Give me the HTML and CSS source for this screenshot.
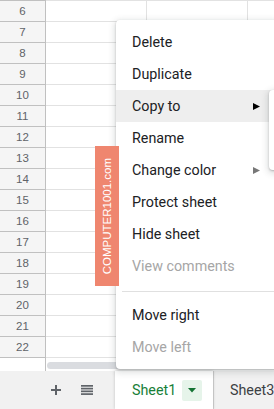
FILE: index.html
```html
<!DOCTYPE html>
<html>
<head>
<meta charset="utf-8">
<link rel="stylesheet" href="styles.css">
</head>
<body>
<div class="app">
  <div class="grid">
    <div class="row"><div class="rh">6</div><div class="c"></div><div class="c"></div><div class="c"></div></div>
    <div class="row"><div class="rh">7</div><div class="c"></div><div class="c"></div><div class="c"></div></div>
    <div class="row"><div class="rh">8</div><div class="c"></div><div class="c"></div><div class="c"></div></div>
    <div class="row"><div class="rh">9</div><div class="c"></div><div class="c"></div><div class="c"></div></div>
    <div class="row"><div class="rh">10</div><div class="c"></div><div class="c"></div><div class="c"></div></div>
    <div class="row"><div class="rh">11</div><div class="c"></div><div class="c"></div><div class="c"></div></div>
    <div class="row"><div class="rh">12</div><div class="c"></div><div class="c"></div><div class="c"></div></div>
    <div class="row"><div class="rh">13</div><div class="c"></div><div class="c"></div><div class="c"></div></div>
    <div class="row"><div class="rh">14</div><div class="c"></div><div class="c"></div><div class="c"></div></div>
    <div class="row"><div class="rh">15</div><div class="c"></div><div class="c"></div><div class="c"></div></div>
    <div class="row"><div class="rh">16</div><div class="c"></div><div class="c"></div><div class="c"></div></div>
    <div class="row"><div class="rh">17</div><div class="c"></div><div class="c"></div><div class="c"></div></div>
    <div class="row"><div class="rh">18</div><div class="c"></div><div class="c"></div><div class="c"></div></div>
    <div class="row"><div class="rh">19</div><div class="c"></div><div class="c"></div><div class="c"></div></div>
    <div class="row"><div class="rh">20</div><div class="c"></div><div class="c"></div><div class="c"></div></div>
    <div class="row"><div class="rh">21</div><div class="c"></div><div class="c"></div><div class="c"></div></div>
    <div class="row"><div class="rh">22</div><div class="c"></div><div class="c"></div><div class="c"></div></div>
  </div>
  <div class="hscroll">
    <div class="hs-head"></div>
    <div class="track"><div class="thumb"></div></div>
  </div>
  <div class="tabbar">
    <div class="tbtn">
      <svg width="10" height="10" viewBox="0 0 10 10"><rect x="4" y="0" width="2" height="10" fill="#5f6368"/><rect x="0" y="4" width="10" height="2" fill="#5f6368"/></svg>
    </div>
    <div class="tbtn">
      <svg width="12" height="10" viewBox="0 0 12 10"><rect x="0" y="0" width="12" height="1.7" fill="#5f6368"/><rect x="0" y="2.75" width="12" height="1.7" fill="#5f6368"/><rect x="0" y="5.5" width="12" height="1.7" fill="#5f6368"/><rect x="0" y="8.25" width="12" height="1.7" fill="#5f6368"/></svg>
    </div>
    <div class="tabs">
      <div class="tab active">
        <span class="tab-name">Sheet1</span>
        <span class="tab-dd"><svg width="8" height="5" viewBox="0 0 8 5"><polygon points="0,0 8,0 4,4.5" fill="#137333"/></svg></span>
      </div>
      <div class="tab">
        <span class="tab-name">Sheet3</span>
      </div>
    </div>
  </div>

  <div class="menu">
    <div class="item">Delete</div>
    <div class="item">Duplicate</div>
    <div class="item hover"><span>Copy to</span><svg class="arr" width="7" height="7" viewBox="0 0 7 7"><polygon points="0,0 7,3.5 0,7" fill="#000"/></svg></div>
    <div class="item">Rename</div>
    <div class="item"><span>Change color</span><svg class="arr" width="7" height="7" viewBox="0 0 7 7"><polygon points="0,0 7,3.5 0,7" fill="#777"/></svg></div>
    <div class="item">Protect sheet</div>
    <div class="item">Hide sheet</div>
    <div class="item disabled">View comments</div>
    <div class="sep"></div>
    <div class="item">Move right</div>
    <div class="item disabled">Move left</div>
  </div>
  <div class="submenu"></div>
  <div class="watermark"><span>COMPUTER1001.com</span></div>
</div>
</body>
</html>
```
FILE: styles.css
```css
html, body {
  margin: 0;
  padding: 0;
  background: #fff;
}
.app {
  position: relative;
  width: 274px;
  height: 409px;
  overflow: hidden;
  display: flex;
  flex-direction: column;
}
.grid {
  display: flex;
  flex-direction: column;
}
.row {
  display: flex;
  height: 21px;
}
.rh {
  box-sizing: border-box;
  flex: 0 0 46px;
  height: 21px;
  border-top: 1px solid #c0c0c0;
  border-right: 1px solid #c0c0c0;
  background: #f5f5f5;
  color: #5f6368;
  font: 11.5px "Liberation Sans", Arial, sans-serif;
  display: flex;
  align-items: center;
  justify-content: center;
}
.c {
  box-sizing: border-box;
  flex: 0 0 101px;
  height: 21px;
  border-top: 1px solid #e2e2e2;
  border-right: 1px solid #e2e2e2;
}
.hscroll {
  display: flex;
  height: 14px;
}
.hs-head {
  box-sizing: border-box;
  flex: 0 0 46px;
  border-top: 1px solid #c0c0c0;
  border-right: 1px solid #c0c0c0;
}
.track {
  flex: 1;
  border-top: 1px solid #e2e2e2;
  padding: 4px 0 0 1px;
}
.thumb {
  width: 300px;
  height: 7px;
  border-radius: 4px;
  background: #dadce0;
}
.tabbar {
  flex: 1;
  display: flex;
  background: #f1f1f1;
  padding-left: 41px;
}
.tbtn {
  flex: 0 0 30px;
  margin-right: 1px;
  display: flex;
  align-items: center;
  justify-content: center;
}
.tabs {
  flex: 0 0 auto;
  display: flex;
  margin-left: 12px;
}
.tab {
  flex: 0 0 auto;
  display: flex;
  align-items: center;
  padding: 0 11px 0 16px;
  font: 14.3px Roboto, "Liberation Sans", sans-serif;
  color: #3c4043;
  border-left: 1px solid #d4d4d4;
}
.tab.active {
  background: #fff;
  color: #188038;
  width: 98px;
  box-sizing: border-box;
  padding-left: 17px;
  border-left: 0;
  box-shadow: 0 0 3px rgba(0,0,0,0.2);
  position: relative;
}
.tab-dd {
  margin-left: 6px;
  width: 20px;
  height: 21px;
  border-radius: 2px;
  background: #e6f4ea;
  display: flex;
  align-items: center;
  justify-content: center;
}
.menu {
  position: absolute;
  left: 116px;
  top: 20px;
  width: 162px;
  padding: 6px 0;
  background: #fff;
  border-radius: 4px;
  box-shadow: 0 2px 6px 2px rgba(60,64,67,0.15), 0 1px 2px rgba(60,64,67,0.3);
  font: 14.3px Roboto, "Liberation Sans", sans-serif;
  color: #202124;
  z-index: 2;
}
.item {
  height: 32px;
  display: flex;
  align-items: center;
  justify-content: space-between;
  padding: 0 18px 0 16px;
}
.item.hover {
  background: #eeeeee;
}
.item.disabled {
  color: #a6a6a6;
}
.sep {
  height: 1px;
  background: #e0e0e0;
  margin: 9px 0 7px 6px;
}
.submenu {
  position: absolute;
  left: 269px;
  top: 90px;
  width: 120px;
  height: 80px;
  background: #fff;
  border-radius: 4px;
  box-shadow: 0 2px 6px 2px rgba(60,64,67,0.15), 0 1px 2px rgba(60,64,67,0.3);
  z-index: 3;
}
.watermark {
  position: absolute;
  left: 95px;
  top: 146px;
  width: 24px;
  height: 140px;
  background: #ef866f;
  display: flex;
  align-items: center;
  justify-content: center;
  z-index: 4;
}
.watermark span {
  writing-mode: vertical-rl;
  transform: rotate(180deg);
  color: #fff;
  font: 11.5px "Liberation Sans", Arial, sans-serif;
}
```
